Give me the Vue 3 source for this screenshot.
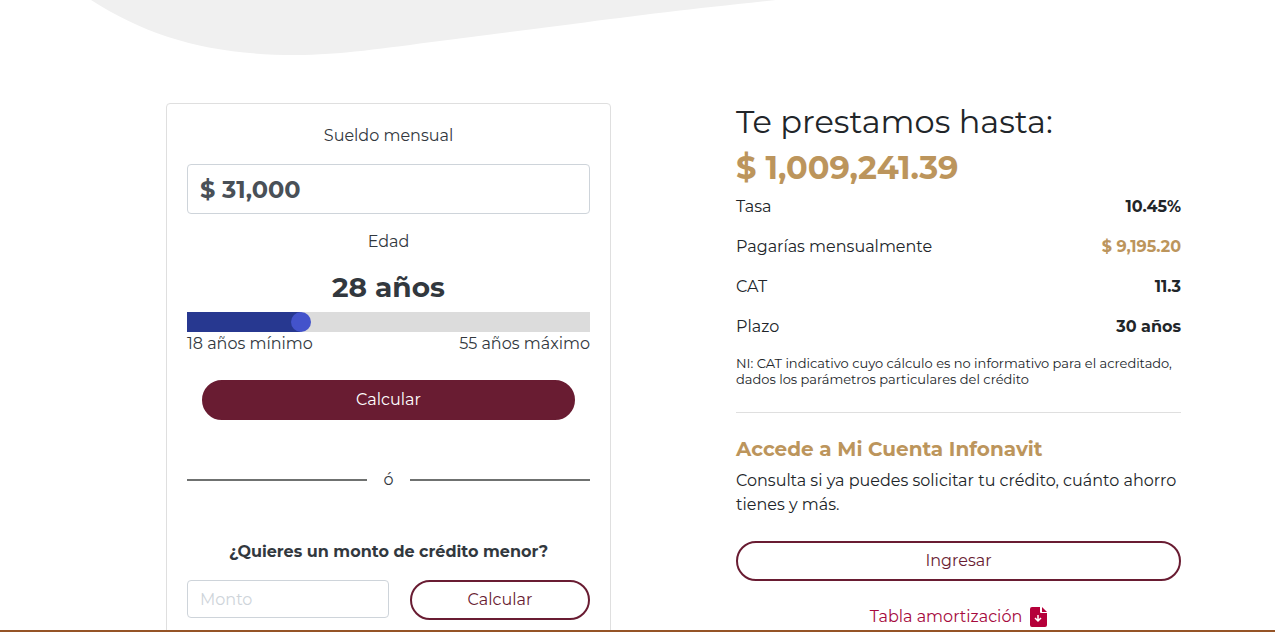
<template>
  <div class="page">
    <main class="content">
      <svg class="blob" width="780" height="56" viewBox="0 0 780 56" aria-hidden="true">
        <path d="M91 0C150 38 213 55 295 55C340 55 385 48 440 41L573 24C640 15 700 8 776 0Z" fill="#f0f0f0" />
      </svg>

      <div class="container">
        <form class="card" @submit.prevent>
          <label class="label" for="sueldo">Sueldo mensual</label>
          <input id="sueldo" v-model="sueldo" class="control salary" type="text" />

          <label class="label" for="edad">Edad</label>
          <output class="age" for="edad">{{ edad }} años</output>
          <input
            id="edad"
            v-model.number="edad"
            class="slider"
            type="range"
            :min="minAge"
            :max="maxAge"
            :style="{ '--progress': progress }"
          />
          <div class="limits">
            <span>{{ minAge }} años mínimo</span>
            <span>{{ maxAge }} años máximo</span>
          </div>

          <button class="btn btn-solid" type="submit">Calcular</button>

          <div class="divider"><span>ó</span></div>

          <label class="question" for="monto">¿Quieres un monto de crédito menor?</label>
          <div class="amount-row">
            <input id="monto" v-model="monto" class="control amount-input" type="text" placeholder="Monto" />
            <button class="btn btn-outline amount-btn" type="button">Calcular</button>
          </div>
        </form>

        <section class="result">
          <h1 class="title">Te prestamos hasta:</h1>
          <p class="total">$ 1,009,241.39</p>
          <dl class="details">
            <div v-for="item in details" :key="item.label" class="detail">
              <dt>{{ item.label }}</dt>
              <dd :class="{ gold: item.gold }">{{ item.value }}</dd>
            </div>
          </dl>
          <p class="note">
            NI: CAT indicativo cuyo cálculo es no informativo para el acreditado,
            dados los parámetros particulares del crédito
          </p>

          <hr class="separator" />

          <h2 class="subtitle">Accede a Mi Cuenta Infonavit</h2>
          <p class="text">
            Consulta si ya puedes solicitar tu crédito, cuánto ahorro
            tienes y más.
          </p>
          <button class="btn btn-outline" type="button">Ingresar</button>
          <a class="table-link" href="#">
            Tabla amortización
            <svg width="17" height="20" viewBox="0 0 17 20" aria-hidden="true">
              <path d="M2 0H10V5Q10 6 11 6H17V18Q17 20 15 20H2Q0 20 0 18V2Q0 0 2 0Z" fill="#b5003a" />
              <path d="M12 0L17 5H12Z" fill="#b5003a" />
              <path d="M8 8V14M5 11L8 14L11 11" fill="none" stroke="#fff" stroke-width="1.5" />
            </svg>
          </a>
        </section>
      </div>
    </main>
    <footer class="bar"></footer>
  </div>
</template>

<script setup>
import { ref, computed } from 'vue';

const minAge = 18;
const maxAge = 55;

const sueldo = ref('$ 31,000');
const edad = ref(28);
const monto = ref('');

const progress = computed(() => (edad.value - minAge) / (maxAge - minAge));

const details = [
  { label: 'Tasa', value: '10.45%' },
  { label: 'Pagarías mensualmente', value: '$ 9,195.20', gold: true },
  { label: 'CAT', value: '11.3' },
  { label: 'Plazo', value: '30 años' }
];
</script>

<style>
body {
  margin: 0;
  background: #fff;
}
</style>

<style scoped>
* {
  box-sizing: border-box;
}

.page {
  display: flex;
  flex-direction: column;
  height: 100vh;
  color: #212529;
  font-family: Montserrat, Inter, sans-serif;
  font-size: 16px;
  line-height: 24px;
}

.content {
  position: relative;
  flex: 1;
  min-height: 0;
  padding: 103px 23px 0 0;
  overflow-y: auto;
  scrollbar-width: none;
}

.bar {
  flex: none;
  height: 2px;
  background: #955426;
}

.blob {
  position: absolute;
  top: 0;
  left: 0;
}

.container {
  display: grid;
  grid-template-columns: 1fr 1fr;
  align-items: start;
  gap: 125px;
  max-width: 1140px;
  margin: 0 auto;
  padding: 0 15px 0 110px;
}

.card {
  display: flex;
  flex-direction: column;
  padding: 20px;
  border: 1px solid #dfdfdf;
  border-radius: 4px;
  color: #32383e;
}

.label,
.question {
  text-align: center;
}

.control {
  width: 100%;
  min-width: 0;
  padding: 6px 12px;
  border: 1px solid #ced4da;
  border-radius: 4px;
  background: #fff;
  color: #495057;
  font: inherit;
}

.control::placeholder {
  color: #ced4da;
  opacity: 1;
}

.salary {
  height: 50px;
  margin: 16px 0;
  font-size: 24px;
  font-weight: 700;
}

.age {
  margin: 16px 0 8px;
  font-size: 28px;
  font-weight: 700;
  line-height: 34px;
  text-align: center;
}

.slider {
  width: 100%;
  height: 20px;
  margin: 0;
  appearance: none;
  background: linear-gradient(#273890, #273890) no-repeat #dcdcdc;
  background-size: calc(10px + (100% - 20px) * var(--progress)) 100%;
}

.slider::-webkit-slider-thumb {
  width: 20px;
  height: 20px;
  appearance: none;
  border-radius: 50%;
  background: #4353cb;
}

.limits {
  display: flex;
  justify-content: space-between;
}

.btn {
  height: 40px;
  padding: 0 16px;
  border: 2px solid #691c32;
  border-radius: 20px;
  font: inherit;
  cursor: pointer;
}

.btn-solid {
  margin: 24px 15px 48px;
  background: #691c32;
  color: #fff;
}

.btn-outline {
  background: #fff;
  color: #691c32;
}

.divider {
  display: flex;
  align-items: center;
  gap: 16px;
}

.divider::before,
.divider::after {
  content: '';
  flex: 1;
  height: 2px;
  background: #6f7170;
}

.question {
  margin: 48px 0 16px;
  font-weight: 700;
}

.amount-row {
  display: flex;
  align-items: flex-start;
  gap: 21px;
}

.amount-input {
  flex: 1;
  height: 38px;
}

.amount-btn {
  flex: 0 0 180px;
}

.result {
  display: flex;
  flex-direction: column;
}

.title {
  margin: 0 0 8px;
  font-size: 32px;
  font-weight: 400;
  line-height: 38px;
}

.total {
  margin: 0;
  color: #bc955c;
  font-size: 32px;
  font-weight: 700;
  line-height: 38px;
}

.details {
  margin: 8px 0 0;
}

.detail {
  display: flex;
  justify-content: space-between;
  margin-bottom: 16px;
}

.detail dd {
  margin: 0;
  font-weight: 700;
}

.detail .gold {
  color: #bc955c;
}

.note {
  margin: 0;
  font-size: 13px;
  line-height: 16px;
}

.separator {
  width: 100%;
  margin: 25px 0 24px;
  border: 0;
  border-top: 1px solid #dfdfdf;
}

.subtitle {
  margin: 0 0 8px;
  color: #bc955c;
  font-size: 20px;
  font-weight: 700;
  line-height: 24px;
}

.text {
  margin: 0 0 24px;
}

.table-link {
  display: flex;
  align-items: center;
  justify-content: center;
  gap: 8px;
  margin: 24px 0;
  color: #a6093d;
  text-decoration: none;
}
</style>
